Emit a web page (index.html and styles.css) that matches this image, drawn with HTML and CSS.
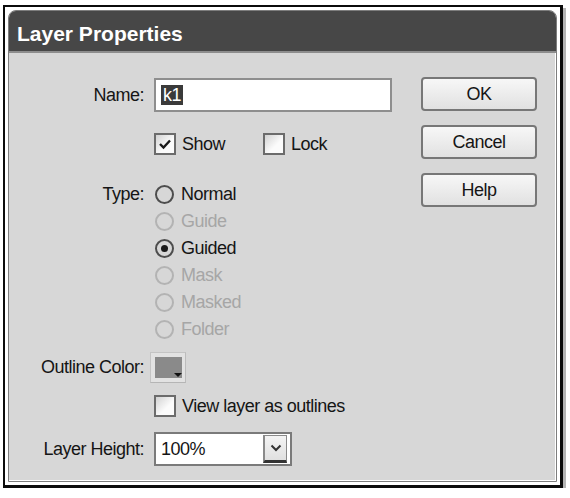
FILE: index.html
```html
<!DOCTYPE html>
<html lang="en">

<head>
    <meta charset="UTF-8">
    <meta name="viewport" content="width=device-width, initial-scale=1.0">
    <title>Layer Properties</title>
    <link rel="stylesheet" href="styles.css">
</head>

<body>
    <div class="frame">
        <div class="window">
            <div class="title-bar">Layer Properties</div>
            <div class="dialog-body">
                <form class="fields" id="layerPropertiesForm">
                    <div class="row row-name">
                        <span class="field-label">Name:</span>
                        <div class="text-box"><span class="selected">k1</span></div>
                    </div>

                    <div class="row row-show">
                        <span class="check-item">
                            <span class="check-box">
                                <svg width="14" height="14" viewBox="0 0 14 14">
                                    <polyline points="2,7 5.5,10.5 12,3.5" fill="none" stroke="#1a1a1a" stroke-width="2.4" />
                                </svg>
                            </span>
                            Show
                        </span>
                        <span class="check-item">
                            <span class="check-box"></span>
                            Lock
                        </span>
                    </div>

                    <div class="row row-type">
                        <span class="field-label">Type:</span>
                        <div class="radio-list">
                            <span class="radio-item"><span class="radio"></span>Normal</span>
                            <span class="radio-item disabled"><span class="radio"></span>Guide</span>
                            <span class="radio-item"><span class="radio checked"></span>Guided</span>
                            <span class="radio-item disabled"><span class="radio"></span>Mask</span>
                            <span class="radio-item disabled"><span class="radio"></span>Masked</span>
                            <span class="radio-item disabled"><span class="radio"></span>Folder</span>
                        </div>
                    </div>

                    <div class="row row-outline">
                        <span class="field-label">Outline Color:</span>
                        <span class="swatch">
                            <span class="swatch-color"></span>
                            <span class="swatch-arrow"></span>
                        </span>
                    </div>

                    <div class="row row-view">
                        <span class="check-item">
                            <span class="check-box"></span>
                            View layer as outlines
                        </span>
                    </div>

                    <div class="row row-height">
                        <span class="field-label">Layer Height:</span>
                        <div class="select-box">
                            <span class="select-value">100%</span>
                            <span class="select-button">
                                <svg width="12" height="8" viewBox="0 0 12 8">
                                    <polyline points="1.5,1.5 6,6 10.5,1.5" fill="none" stroke="#333" stroke-width="2" />
                                </svg>
                            </span>
                        </div>
                    </div>
                </form>

                <div class="buttons">
                    <button type="button" class="btn">OK</button>
                    <button type="button" class="btn">Cancel</button>
                    <button type="button" class="btn">Help</button>
                </div>
            </div>
        </div>
    </div>
</body>

</html>
```

FILE: styles.css
```css
* {
    box-sizing: border-box;
}

body {
    margin: 0;
    background-color: #fff;
    font-family: "Liberation Sans", Arial, sans-serif;
    font-size: 18px;
    letter-spacing: -0.5px;
    color: #151515;
}

/* black outline with a soft drop shadow */
.frame {
    width: 560px;
    height: 483px;
    margin: 5px 0 0 3px;
    padding: 3px;
    border: 2px solid #0b0b0b;
    border-right-width: 3px;
    border-bottom-width: 3px;
    background-color: #fff;
    box-shadow: 3px 3px 0 #b4b4b4;
}

.window {
    height: 100%;
    display: flex;
    flex-direction: column;
    border: 1px solid #7d7d7d;
    border-radius: 8px 8px 0 0;
    background-color: #d7d7d7;
    box-shadow: inset -1px -1px 0 #fff;
    overflow: hidden;
}

.title-bar {
    height: 42px;
    padding: 5px 0 0 8px;
    display: flex;
    align-items: center;
    background-color: #474747;
    border-bottom: 2px solid #8d8d8d;
    color: #fff;
    font-size: 21px;
    font-weight: bold;
    letter-spacing: 0;
}

.dialog-body {
    display: flex;
    padding: 24px 19px 0 1px;
}

.fields {
    display: flex;
    flex-direction: column;
}

.row {
    display: flex;
    align-items: center;
    gap: 11px;
}

.field-label {
    width: 134px;
    flex-shrink: 0;
    text-align: right;
}

.row-name {
    height: 34px;
    margin-top: 1px;
    gap: 10px;
}

.text-box {
    width: 238px;
    height: 34px;
    padding: 5px 0 0 5px;
    background-color: #fff;
    border: 2px solid #8e8e8e;
}

.selected {
    display: inline-block;
    padding: 0 2px;
    line-height: 20px;
    background-color: #3a3a3a;
    color: #fff;
}

.row-show {
    height: 22px;
    margin-top: 21px;
    padding-left: 144px;
    gap: 0;
}

.check-item {
    display: flex;
    align-items: center;
    gap: 6px;
    margin-right: 38px;
}

.check-box {
    width: 22px;
    height: 22px;
    display: flex;
    align-items: center;
    justify-content: center;
    border: 2px solid #6b6b6b;
    background: linear-gradient(135deg, #d2d2d2, #fbfbfb 60%);
}

.row-type {
    align-items: flex-start;
    margin-top: 26px;
    gap: 10px;
}

.row-type .field-label {
    line-height: 27px;
}

.radio-list {
    display: flex;
    flex-direction: column;
    margin-left: 1px;
}

.radio-item {
    height: 27px;
    display: flex;
    align-items: center;
    gap: 7px;
}

.radio {
    width: 19px;
    height: 19px;
    display: flex;
    align-items: center;
    justify-content: center;
    border: 2px solid #4d4d4d;
    border-radius: 50%;
}

.radio.checked::after {
    content: "";
    width: 7px;
    height: 7px;
    border-radius: 50%;
    background-color: #1a1a1a;
}

.radio-item.disabled {
    color: #a6a6a6;
}

.radio-item.disabled .radio {
    border-color: #b3b3b3;
}

.row-outline {
    height: 31px;
    margin-top: 9px;
    gap: 6px;
}

.swatch {
    position: relative;
    width: 36px;
    height: 31px;
    padding: 4px;
    border: 1px solid #c4c4c4;
    border-right-color: #bcbcbc;
    border-bottom-color: #b5b5b5;
    background-color: #e2e2e2;
}

.swatch-color {
    display: block;
    width: 27px;
    height: 21px;
    background-color: #8a8a8a;
}

.swatch-arrow {
    position: absolute;
    right: 3px;
    bottom: 5px;
    border-left: 4px solid transparent;
    border-right: 4px solid transparent;
    border-top: 4px solid #111;
}

.row-view {
    height: 22px;
    margin-top: 12px;
    padding-left: 144px;
}

.row-height {
    height: 34px;
    margin-top: 15px;
    gap: 10px;
}

.select-box {
    width: 138px;
    height: 34px;
    display: flex;
    align-items: center;
    justify-content: space-between;
    padding: 0 3px 0 5px;
    background-color: #fff;
    border: 2px solid #7a7a7a;
}

.select-button {
    width: 24px;
    height: 28px;
    display: flex;
    align-items: center;
    justify-content: center;
    border: 1px solid #8a8a8a;
    border-bottom: 3px solid #333;
    border-left-width: 2px;
    background: linear-gradient(#f4f4f4, #e0e0e0);
}

.buttons {
    width: 116px;
    margin-left: auto;
    display: flex;
    flex-direction: column;
    gap: 14px;
}

.btn {
    height: 34px;
    border: 2px solid #777;
    border-radius: 4px;
    background: linear-gradient(#f7f7f7, #e1e1e1);
    font-family: "Liberation Sans", Arial, sans-serif;
    font-size: 18px;
    letter-spacing: -0.5px;
    color: #151515;
}
```
